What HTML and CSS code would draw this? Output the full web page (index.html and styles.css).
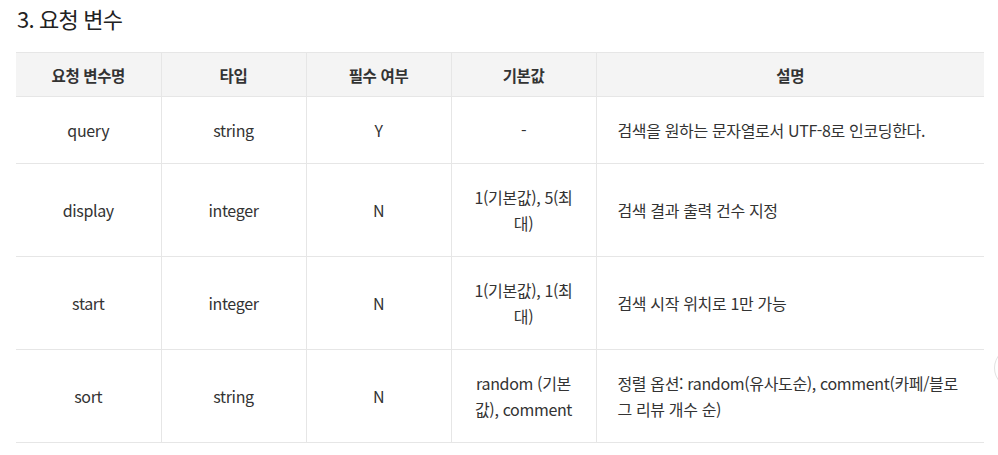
FILE: index.html
```html
<!DOCTYPE html>
<html lang="ko">
<head>
<meta charset="utf-8">
<link rel="stylesheet" href="styles.css">
</head>
<body>
<div class="page">
  <h3 class="title">3. 요청 변수</h3>
  <table class="params">
    <colgroup>
      <col class="c-name"><col class="c-type"><col class="c-req"><col class="c-def"><col class="c-desc">
    </colgroup>
    <thead>
      <tr><th>요청 변수명</th><th>타입</th><th>필수 여부</th><th>기본값</th><th>설명</th></tr>
    </thead>
    <tbody>
      <tr><td>query</td><td>string</td><td>Y</td><td>-</td><td class="desc">검색을 원하는 문자열로서 UTF-8로 인코딩한다.</td></tr>
      <tr><td>display</td><td>integer</td><td>N</td><td>1(기본값), 5(최대)</td><td class="desc">검색 결과 출력 건수 지정</td></tr>
      <tr><td>start</td><td>integer</td><td>N</td><td>1(기본값), 1(최대)</td><td class="desc">검색 시작 위치로 1만 가능</td></tr>
      <tr><td>sort</td><td>string</td><td>N</td><td>random (기본값), comment</td><td class="desc">정렬 옵션: random(유사도순), comment(카페/블로그 리뷰 개수 순)</td></tr>
    </tbody>
  </table>
  <div class="float-btn"></div>
</div>
</body>
</html>
```

FILE: styles.css
```css
html, body {
  margin: 0;
  padding: 0;
  background: #fff;
  overflow: hidden;
}
body {
  font-family: "Noto Sans CJK KR", "Noto Sans", sans-serif;
  color: #333;
}
.page {
  position: relative;
  padding: 0 14px 0 16px;
  width: 968px;
  height: 455px;
}
.title {
  margin: 0;
  padding: 2px 0 0 1px;
  height: 52px;
  box-sizing: border-box;
  font-size: 22px;
  font-weight: 400;
  line-height: 32px;
  color: #222;
  letter-spacing: -0.8px;
}
.params {
  width: 968px;
  border-collapse: collapse;
  table-layout: fixed;
  font-size: 16px;
  letter-spacing: -0.35px;
}
.c-name, .c-type, .c-req, .c-def { width: 145px; }
.params th, .params td {
  border: 1px solid #e6e6e6;
  text-align: center;
  vertical-align: middle;
}
.params tr > :first-child { border-left: none; }
.params tr > :last-child { border-right: none; }
.params th {
  background: #f4f4f4;
  font-weight: 700;
  font-size: 15.5px;
  line-height: 26px;
  padding: 9px 20px 8px;
  color: #333;
}
.params td {
  line-height: 26px;
  padding: 20px 20px;
  height: 26px;
}
.params td.desc {
  text-align: left;
  padding-left: 21px;
}
.float-btn {
  position: absolute;
  left: 994px;
  top: 347px;
  width: 40px;
  height: 40px;
  border: 1px solid #e2e2e2;
  border-radius: 50%;
  background: #fff;
}
```
